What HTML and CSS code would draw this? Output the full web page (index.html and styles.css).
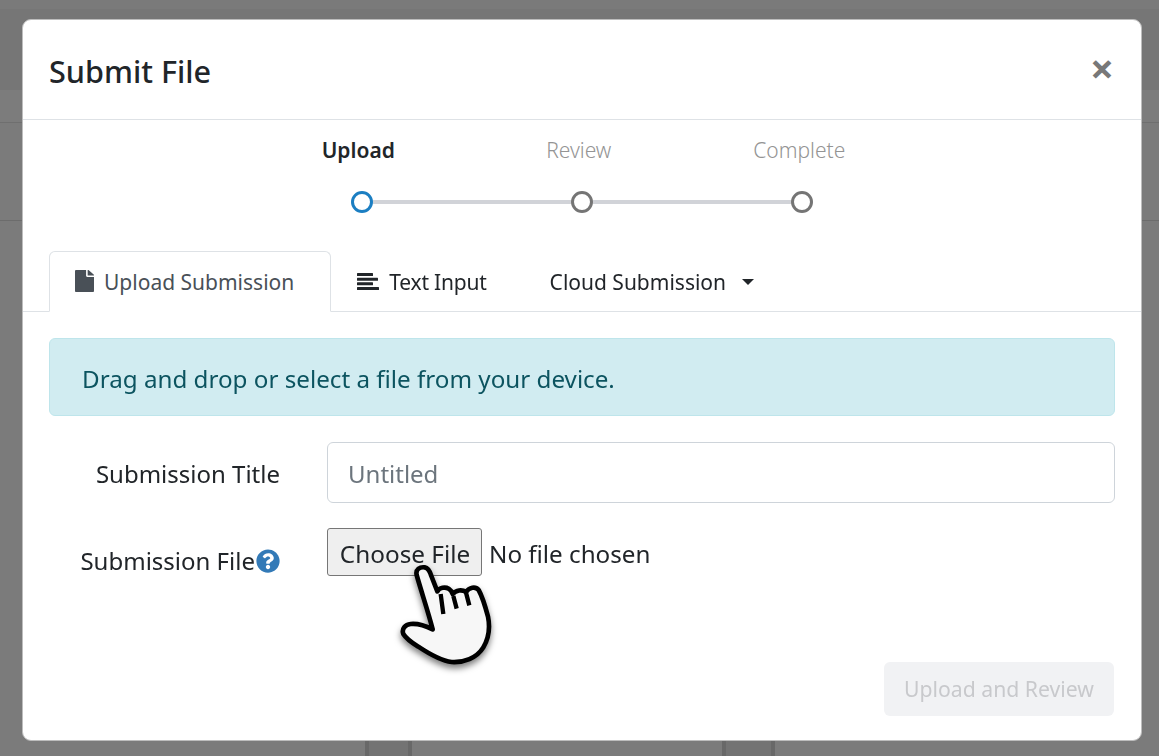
FILE: index.html
```html
<!DOCTYPE html>
<html lang="en">
<head>
<meta charset="utf-8">
<title>Submit File</title>
<link rel="stylesheet" href="styles.css">
</head>
<body>
<div class="page">
  <div class="band-top"></div>
  <div class="band-nav"></div>
  <div class="band-sub"></div>
  <div class="band-main">
    <div class="leg"></div>
    <div class="leg leg-wide"></div>
  </div>
</div>
<div class="backdrop">
  <section class="modal">
    <header class="modal-header">
      <h2 class="modal-title">Submit File</h2>
      <span class="close">×</span>
    </header>
    <div class="steps">
      <div class="step-labels">
        <span class="step-label active">Upload</span>
        <span class="step-label">Review</span>
        <span class="step-label">Complete</span>
      </div>
      <div class="step-track">
        <span class="dot dot-active"></span>
        <span class="connector"></span>
        <span class="dot"></span>
        <span class="connector"></span>
        <span class="dot"></span>
      </div>
    </div>
    <nav class="tabs">
      <a class="tab tab-active">
        <svg class="tab-icon icon-file" viewBox="0 0 384 512" preserveAspectRatio="none"><path fill="#495057" d="M224 136V0H24C10.700 0 0 10.700 0 24v464c0 13.300 10.700 24 24 24h336c13.300 0 24-10.700 24-24V160H248c-13.200 0-24-10.800-24-24zm160-14.100v6.100H256V0h6.100c6.400 0 12.500 2.500 17 7l97.900 98c4.500 4.500 7 10.600 7 16.900z"/></svg>
        Upload Submission
      </a>
      <a class="tab">
        <svg class="tab-icon icon-lines" viewBox="0 0 22 17"><rect fill="#212529" x="0" y="0" width="16" height="3" rx=".5"/><rect fill="#212529" x="0" y="4.700" width="21" height="3" rx=".5"/><rect fill="#212529" x="0" y="9.300" width="16" height="3" rx=".5"/><rect fill="#212529" x="0" y="14" width="22" height="3" rx=".5"/></svg>
        <span class="tab-tight">Text Input</span>
      </a>
      <a class="tab tab-drop">Cloud Submission<span class="caret"></span></a>
    </nav>
    <div class="pane">
      <div class="alert">Drag and drop or select a file from your device.</div>
      <div class="form-row row-title">
        <label class="form-label" for="title">Submission Title</label>
        <input class="form-input" id="title" type="text" placeholder="Untitled">
      </div>
      <div class="form-row row-file">
        <label class="form-label label-file" for="file">Submission File<svg class="help" viewBox="0 0 512 512"><path fill="#337ab7" d="M504 256c0 136.997-111.043 248-248 248S8 392.997 8 256C8 119.083 119.043 8 256 8s248 111.083 248 248zM262.655 90c-54.497 0-89.255 22.957-116.549 63.758-3.536 5.286-2.353 12.415 2.715 16.258l34.699 26.310c5.205 3.947 12.621 3.008 16.665-2.122 17.864-22.658 30.113-35.797 57.303-35.797 20.429 0 45.698 13.148 45.698 32.958 0 14.976-12.363 22.667-32.534 33.976C247.128 238.528 216 254.941 216 296v4c0 6.627 5.373 12 12 12h56c6.627 0 12-5.373 12-12v-1.333c0-28.462 83.186-29.647 83.186-106.667 0-58.002-60.165-102-116.531-102zM256 338c-25.365 0-46 20.635-46 46 0 25.364 20.635 46 46 46s46-20.636 46-46c0-25.365-20.635-46-46-46z"/></svg></label>
        <div class="file-field">
          <button class="file-button" type="button">Choose File</button>
          <span class="file-name">No file chosen</span>
        </div>
      </div>
      <div class="actions">
        <button class="submit" type="button" disabled>Upload and Review</button>
      </div>
    </div>
    <svg class="hand" viewBox="0 0 600 510" aria-hidden="true">
      <path class="hand-shape" d="M290 195C286 178 300 170 314 172C326 174 330 184 334 198L352 244C358 232 376 230 386 236C392 240 396 246 398 252C408 240 426 238 438 246C448 232 466 228 476 240C486 258 496 290 504 320C510 350 506 385 490 412C470 445 430 458 395 456C360 452 325 430 295 410C275 398 258 385 250 372C244 356 256 344 272 342C294 340 318 348 338 358C326 310 304 245 290 195Z"/>
      <path class="hand-crease" d="M362 252L370 312M400 258L410 296M438 248L448 286"/>
    </svg>
  </section>
</div>
</body>
</html>
```
FILE: styles.css
```css
* { box-sizing: border-box; }
html, body { margin: 0; height: 100%; overflow: hidden; }
body {
  font-family: "Noto Sans", "Open Sans", "Liberation Sans", sans-serif;
  font-size: 24px;
  line-height: 36px;
  color: #212529;
  background: #7b7b7b;
}
.page { height: 756px; display: flex; flex-direction: column; }
.band-top { height: 90px; background: #767676; border-top: 9px solid #7a7a7a; }
.band-nav { height: 33px; background: #7c7c7c; border-bottom: 1px solid #6f6f6f; }
.band-sub { height: 98px; background: #7b7b7b; border-bottom: 1px solid #6c6c6c; }
.band-main { flex: 1; display: flex; align-items: flex-end; padding-left: 365px; gap: 310px; }
.leg { width: 47px; height: 20px; background: #737373; border-left: 4px solid #686868; border-right: 4px solid #686868; }
.leg-wide { width: 53px; }

.backdrop { position: fixed; inset: 0; padding: 19px 17px 15px 22px; }
.modal {
  position: relative;
  height: 722px;
  background: #fff;
  border: 1px solid #bdbdbd;
  border-radius: 9px;
  display: flex;
  flex-direction: column;
}
.modal-header {
  height: 100px;
  padding: 0 26px;
  border-bottom: 1px solid #dee2e6;
  display: flex;
  align-items: center;
  justify-content: space-between;
  flex: none;
}
.modal-title { margin: 4px 0 0; font-size: 30.6px; font-weight: 500; line-height: 45px; }
.close { font-size: 42px; font-weight: 700; color: #787878; line-height: 1; margin-top: -3px; margin-right: 1px; }

.steps { height: 131px; flex: none; padding-top: 12px; }
.step-labels { display: flex; padding-left: 225px; }
.step-label { width: 220.5px; font-size: 21px; line-height: 36px; color: #949494; font-weight: 300; text-align: center; }
.step-label.active { color: #212529; font-weight: 600; }
.step-track { display: flex; align-items: center; margin: 23px 0 0 328px; }
.dot { width: 22px; height: 22px; border: 3px solid #757575; border-radius: 50%; background: #fff; flex: none; }
.dot-active { border-color: #1b7ec2; }
.connector { width: 198px; height: 4px; background: #d1d3d8; flex: none; }

.tabs { height: 61px; flex: none; padding-left: 26px; display: flex; border-bottom: 1px solid #dee2e6; font-size: 21px; }
.tab { height: 61px; padding: 0 36px 0 25px; display: flex; align-items: center; gap: 10px; border: 1px solid transparent; border-radius: 6px 6px 0 0; }
.tab-active { color: #495057; background: #fff; border-color: #dee2e6 #dee2e6 #fff; }
.tab-drop { padding-left: 24px; }
.tab-tight { letter-spacing: -.2px; margin-right: 1px; }
.tab-icon { flex: none; }
.icon-file { width: 19px; height: 22px; margin-top: -1px; }
.icon-lines { width: 22px; height: 17px; margin-top: -1px; }
.caret { width: 0; height: 0; margin-left: 6px; border-top: 6px solid #212529; border-left: 6px solid transparent; border-right: 6px solid transparent; }

.pane { flex: 1; padding: 26px 26px 0; display: flex; flex-direction: column; }
.alert { height: 78px; padding: 4px 32px 0; display: flex; align-items: center; background: #d1ecf1; border: 1px solid #bee5eb; border-radius: 6px; color: #0c5460; font-size: 24.2px; }
.form-row { display: flex; }
.row-title { margin-top: 26px; align-items: center; }
.row-file { margin-top: 25px; }
.form-label { width: 231px; text-align: right; flex: none; margin-right: 47px; padding-top: 2px; }
.label-file { display: flex; justify-content: flex-end; align-items: center; height: 66px; padding-top: 0; }
.help { width: 24px; height: 24px; margin-left: 1px; flex: none; }
.form-input { flex: 1; height: 61px; padding: 2px 20px 0; border: 1px solid #ced4da; border-radius: 6px; font: inherit; color: #495057; }
.form-input::placeholder { color: #6c757d; opacity: 1; }
.file-field { display: flex; align-items: center; height: 48px; gap: 8px; font-size: 24.2px; }
.file-button { width: 155px; height: 48px; padding: 3px 0 0 1px; border: 1px solid #767676; border-radius: 3px; background: #efefef; font: inherit; font-size: 24.3px; color: #212529; }
.file-name { color: #212529; padding-top: 3px; margin-left: -1px; }
.actions { display: flex; justify-content: flex-end; margin-top: 68px; padding-right: 1px; }
.submit { width: 230px; height: 54px; padding: 0; border: 0; border-radius: 6px; background: #f1f2f4; color: #c8c9cc; font: inherit; font-size: 21.2px; }

.hand { position: absolute; left: 297px; top: 490px; width: 200px; height: 170px; overflow: visible; filter: drop-shadow(0 4px 3px rgba(0,0,0,.5)); }
.hand-shape { fill: #f7f7f7; stroke: #000; stroke-width: 14; stroke-linejoin: round; }
.hand-crease { fill: none; stroke: #000; stroke-width: 13; }
```
